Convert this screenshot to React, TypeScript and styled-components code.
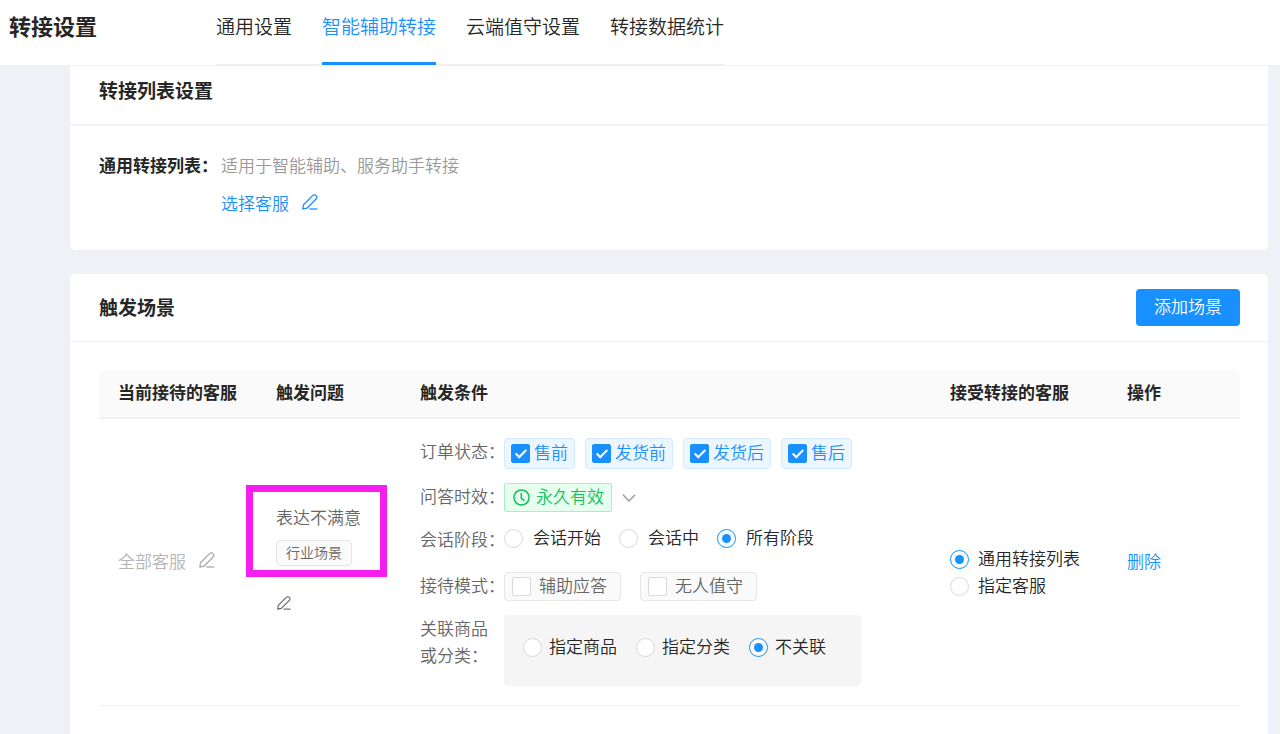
import React from 'react';
import styled, { createGlobalStyle, css } from 'styled-components';

const BLUE = '#1890ff';
const INK = '#262626';
const GREY = '#666';

const GlobalStyle = createGlobalStyle`
  *, *::before, *::after { box-sizing: border-box; }
  body {
    margin: 0;
    background: #f0f1f6;
    color: ${INK};
    font-family: "Noto Sans CJK SC", sans-serif;
    font-size: 17px;
    font-weight: 350;
    line-height: 27px;
  }
  button, input { font: inherit; margin: 0; }
`;

const Page = styled.div`
  display: flex;
  flex-direction: column;
  min-height: 100vh;
`;

const TopBar = styled.header`
  display: flex;
  background: #fff;
  border-bottom: 1px solid #eff0f3;
`;

const Title = styled.h1`
  flex: 0 0 216px;
  margin: 0;
  padding: 10px 0 0 9px;
  font-size: 22px;
  line-height: 30px;
  font-weight: 700;
`;

const Tabs = styled.nav`
  display: flex;
  gap: 30px;
  box-shadow: inset 0 -1px 0 #f0f0f0;
`;

const Tab = styled.a<{ $active?: boolean }>`
  padding: 11px 0 21px;
  border-bottom: 3px solid ${(p) => (p.$active ? BLUE : 'transparent')};
  color: ${(p) => (p.$active ? BLUE : INK)};
  font-size: 19px;
  line-height: 30px;
  text-decoration: none;
`;

const Main = styled.main`
  flex: 1;
  display: flex;
  flex-direction: column;
  gap: 24px;
  padding: 0 12px 0 70px;
`;

const Card = styled.section<{ $first?: boolean }>`
  background: #fff;
  ${(p) =>
    p.$first
      ? css`border-radius: 0 0 5px 5px;`
      : css`
          flex: 1;
          border-radius: 5px 5px 0 0;
        `}
`;

const CardHead = styled.div<{ $first?: boolean }>`
  display: flex;
  align-items: center;
  justify-content: space-between;
  padding: ${(p) => (p.$first ? '11px 28px 19px' : '15px 28px')};
  padding-left: 29px;
  border-bottom: ${(p) => (p.$first ? 2 : 1)}px solid #f2f2f2;
`;

const Heading = styled.h2`
  margin: 0;
  padding-bottom: 2px;
  font-size: 19px;
  line-height: 26px;
  font-weight: 700;
`;

const PrimaryButton = styled.button`
  height: 37px;
  padding: 0 18px 4px;
  border: 0;
  border-radius: 4px;
  background: ${BLUE};
  color: #fff;
`;

const ListBody = styled.dl`
  display: grid;
  grid-template-columns: 122px 1fr;
  margin: 0;
  padding: 25px 28px 33px 29px;
  line-height: 28px;
`;

const ListLabel = styled.dt`
  font-weight: 700;
  white-space: nowrap;
`;

const ListValue = styled.dd`
  display: flex;
  flex-direction: column;
  gap: 10px;
  margin: 0;
  color: #999;
`;

const Inline = styled.div`
  display: flex;
  align-items: center;
  gap: 13px;
`;

const Link = styled.a`
  color: ${BLUE};
  text-decoration: none;
`;

const IconButton = styled.button<{ $color: string }>`
  display: flex;
  padding: 0 0 2px;
  border: 0;
  background: none;
  color: ${(p) => p.$color};
`;

const TableWrap = styled.div`
  padding: 28px 28px 0 29px;
`;

const Table = styled.table`
  width: 100%;
  table-layout: fixed;
  border-collapse: separate;
  border-spacing: 0;
`;

const Th = styled.th<{ $w?: number }>`
  ${(p) => p.$w && css`width: ${p.$w}px;`}
  height: 49px;
  padding: 0 0 4px 19px;
  background: #fafafa;
  border-bottom: 2px solid #f0f0f0;
  text-align: left;
  font-weight: 700;
  white-space: nowrap;
  &:first-child { border-top-left-radius: 5px; }
  &:last-child { border-top-right-radius: 5px; }
`;

const Td = styled.td`
  padding: 19px 17px 22px 19px;
  border-bottom: 1px solid #f0f0f0;
  vertical-align: middle;
  white-space: nowrap;
`;

const ConditionsTd = styled(Td)`
  padding-bottom: 19px;
`;

const Muted = styled.span`
  color: #b5b5b5;
`;

const Problem = styled.div`
  position: relative;
  padding-bottom: 12px;
  border-bottom: 1px solid #f0f0f0;
  color: ${GREY};
`;

const ProblemName = styled.div`
  padding-bottom: 2px;
  margin-bottom: 8px;
  line-height: 26px;
`;

const SmallTag = styled.span`
  display: block;
  width: fit-content;
  padding: 0 9px 2px;
  border: 1px solid #e6e6e6;
  border-radius: 4px;
  background: #fafafa;
  font-size: 14px;
  line-height: 22px;
`;

const Highlight = styled.div`
  position: absolute;
  inset: -19px -3px 1px -30px;
  border: 7px solid #f51df0;
  pointer-events: none;
`;

const ProblemEdit = styled.div`
  padding: 17px 0 6px 1px;
`;

const Conditions = styled.div`
  display: flex;
  flex-direction: column;
  gap: 14px;
`;

const Condition = styled.div`
  display: grid;
  grid-template-columns: 84px 1fr;
  align-items: start;
`;

const ConditionLabel = styled.div`
  margin-top: -1px;
  color: ${GREY};
`;

const Options = styled.div<{ $gap: number; $tall?: boolean }>`
  display: flex;
  gap: ${(p) => p.$gap}px;
  ${(p) => p.$tall && css`min-height: 32px;`}
`;

const Panel = styled(Options)`
  width: fit-content;
  padding: 19px 35px 25px 19px;
  border-radius: 4px;
  background: #f5f5f5;
`;

const OptionText = styled.span`
  padding-bottom: 3px;
  line-height: 24px;
`;

const Radio = styled.input.attrs({ type: 'radio' })`
  appearance: none;
  display: grid;
  place-content: center;
  width: 19px;
  height: 19px;
  border: 1px solid #d9d9d9;
  border-radius: 50%;
  background: #fff;
  &:checked { border-color: ${BLUE}; }
  &:checked::after {
    content: "";
    width: 9px;
    height: 9px;
    border-radius: 50%;
    background: ${BLUE};
  }
`;

const Checkbox = styled.input.attrs({ type: 'checkbox' })`
  appearance: none;
  display: grid;
  place-content: center;
  width: 19px;
  height: 19px;
  border: 1px solid #d9d9d9;
  border-radius: 2px;
  background: #fff;
  &:checked {
    border-color: ${BLUE};
    background: ${BLUE};
  }
  &:checked::after {
    content: "";
    width: 6px;
    height: 11px;
    margin-bottom: 3px;
    border: solid #fff;
    border-width: 0 2px 2px 0;
    transform: rotate(45deg);
  }
`;

const RadioLabel = styled.label<{ $gap: number; $h?: number }>`
  display: flex;
  align-items: center;
  gap: ${(p) => p.$gap}px;
  height: ${(p) => p.$h ?? 27}px;
`;

const StatusChip = styled.label`
  display: flex;
  align-items: center;
  gap: 4px;
  height: 31px;
  padding: 0 6px;
  border: 1px solid #d3e9ff;
  border-radius: 4px;
  background: #ebf6ff;
  color: ${BLUE};
`;

const ModeChip = styled.label`
  display: flex;
  align-items: center;
  gap: 8px;
  height: 29px;
  padding: 0 13px 0 7px;
  border: 1px solid #e6e6e6;
  border-radius: 4px;
  background: #fafafa;
  color: ${GREY};
`;

const PeriodButton = styled.button`
  display: flex;
  align-items: center;
  gap: 10px;
  padding: 0;
  border: 0;
  background: none;
  color: #999;
`;

const PeriodTag = styled.span`
  display: flex;
  align-items: center;
  gap: 6px;
  height: 29px;
  padding: 0 7px 0 8px;
  border: 1px solid #a9efc4;
  border-radius: 2px;
  background: #e6ffef;
  color: #14bf5c;
`;

const Receivers = styled.div`
  padding-top: 25px;
`;

const PencilIcon = ({ size = 16 }: { size?: number }) => (
  <svg width={size} height={size} viewBox="0 0 16 16" fill="none" stroke="currentColor" strokeWidth="1.3" strokeLinejoin="round" aria-hidden="true">
    <path d="M.8 15l.7-4.2 9.1-9.2a2.4 2.4 0 0 1 3.5 0 2.4 2.4 0 0 1 0 3.4l-9.2 9.2z" />
    <path d="M7.4 15h8" />
  </svg>
);

const ClockIcon = () => (
  <svg width="17" height="17" viewBox="0 0 17 17" fill="none" stroke="currentColor" strokeWidth="1.5" aria-hidden="true">
    <circle cx="8.5" cy="8.5" r="7.6" />
    <path d="M8.3 4v5.2l3 2.4" />
  </svg>
);

const ChevronIcon = () => (
  <svg width="14" height="14" viewBox="0 0 14 14" fill="none" stroke="currentColor" strokeWidth="1.4" aria-hidden="true">
    <path d="M1 3.7l6 6.2 6-6.2" />
  </svg>
);

type RadioGroupProps = { name: string; items: string[]; value: string; gap: number; height?: number };

const RadioItems = ({ name, items, value, gap, height }: RadioGroupProps) => (
  <>
    {items.map((item) => (
      <RadioLabel key={item} $gap={gap} $h={height}>
        <Radio name={name} defaultChecked={item === value} />
        <OptionText>{item}</OptionText>
      </RadioLabel>
    ))}
  </>
);

const tabs = ['通用设置', '智能辅助转接', '云端值守设置', '转接数据统计'];

export default function App() {
  return (
    <Page lang="zh-CN">
      <GlobalStyle />
      <TopBar>
        <Title>转接设置</Title>
        <Tabs>
          {tabs.map((tab, i) => (
            <Tab key={tab} href="#" $active={i === 1}>{tab}</Tab>
          ))}
        </Tabs>
      </TopBar>
      <Main>
        <Card $first>
          <CardHead $first>
            <Heading>转接列表设置</Heading>
          </CardHead>
          <ListBody>
            <ListLabel>通用转接列表：</ListLabel>
            <ListValue>
              <div>适用于智能辅助、服务助手转接</div>
              <Inline>
                <Link href="#">选择客服</Link>
                <IconButton $color={BLUE} aria-label="编辑"><PencilIcon /></IconButton>
              </Inline>
            </ListValue>
          </ListBody>
        </Card>
        <Card>
          <CardHead>
            <Heading>触发场景</Heading>
            <PrimaryButton>添加场景</PrimaryButton>
          </CardHead>
          <TableWrap>
            <Table>
              <thead>
                <tr>
                  <Th $w={158}>当前接待的客服</Th>
                  <Th $w={144}>触发问题</Th>
                  <Th>触发条件</Th>
                  <Th $w={177}>接受转接的客服</Th>
                  <Th $w={132}>操作</Th>
                </tr>
              </thead>
              <tbody>
                <tr>
                  <Td>
                    <Inline>
                      <Muted>全部客服</Muted>
                      <IconButton $color="#aaa" aria-label="编辑"><PencilIcon /></IconButton>
                    </Inline>
                  </Td>
                  <Td>
                    <Problem>
                      <ProblemName>表达不满意</ProblemName>
                      <SmallTag>行业场景</SmallTag>
                      <Highlight />
                    </Problem>
                    <ProblemEdit>
                      <IconButton $color={GREY} aria-label="编辑"><PencilIcon size={14} /></IconButton>
                    </ProblemEdit>
                  </Td>
                  <ConditionsTd>
                    <Conditions>
                      <Condition>
                        <ConditionLabel>订单状态：</ConditionLabel>
                        <Options $gap={10}>
                          {['售前', '发货前', '发货后', '售后'].map((s) => (
                            <StatusChip key={s}><Checkbox defaultChecked /><OptionText>{s}</OptionText></StatusChip>
                          ))}
                        </Options>
                      </Condition>
                      <Condition>
                        <ConditionLabel>问答时效：</ConditionLabel>
                        <Options $gap={10}>
                          <PeriodButton>
                            <PeriodTag><ClockIcon /><OptionText>永久有效</OptionText></PeriodTag>
                            <ChevronIcon />
                          </PeriodButton>
                        </Options>
                      </Condition>
                      <Condition>
                        <ConditionLabel>会话阶段：</ConditionLabel>
                        <Options $gap={18} $tall>
                          <RadioItems name="stage" items={['会话开始', '会话中', '所有阶段']} value="所有阶段" gap={10} height={24} />
                        </Options>
                      </Condition>
                      <Condition>
                        <ConditionLabel>接待模式：</ConditionLabel>
                        <Options $gap={19}>
                          {['辅助应答', '无人值守'].map((s) => (
                            <ModeChip key={s}><Checkbox /><OptionText>{s}</OptionText></ModeChip>
                          ))}
                        </Options>
                      </Condition>
                      <Condition>
                        <ConditionLabel>关联商品<br />或分类：</ConditionLabel>
                        <Panel $gap={19}>
                          <RadioItems name="relation" items={['指定商品', '指定分类', '不关联']} value="不关联" gap={7} />
                        </Panel>
                      </Condition>
                    </Conditions>
                  </ConditionsTd>
                  <Td>
                    <Receivers>
                      <RadioItems name="receiver" items={['通用转接列表', '指定客服']} value="通用转接列表" gap={9} />
                    </Receivers>
                  </Td>
                  <Td><Link href="#">删除</Link></Td>
                </tr>
              </tbody>
            </Table>
          </TableWrap>
        </Card>
      </Main>
    </Page>
  );
}
